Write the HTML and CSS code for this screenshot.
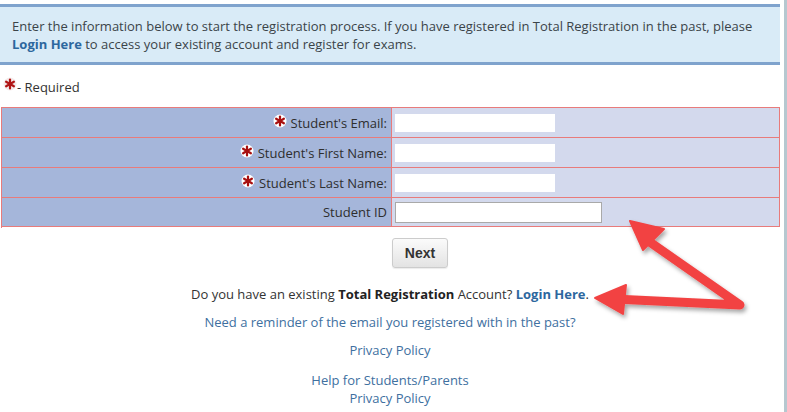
FILE: index.html
```html
<!DOCTYPE html>
<html>
<head>
<meta charset="utf-8">
<link rel="stylesheet" href="styles.css">
</head>
<body>
<div class="page">
  <div class="content">
    <div class="info">
      Enter the information below to start the registration process. If you have registered in Total Registration in the past, please<br>
      <a class="strong-link" href="#">Login Here</a> to access your existing account and register for exams.
    </div>

    <div class="required">
      <svg class="req" viewBox="0 0 14 14" width="14" height="14"><circle cx="7" cy="7" r="6.5" fill="#f4eaea"/><g stroke="#b01515" stroke-width="2.2" stroke-linecap="round"><line x1="7" y1="2.5" x2="7" y2="11.5"/><line x1="3.1" y1="4.75" x2="10.9" y2="9.25"/><line x1="3.1" y1="9.25" x2="10.9" y2="4.75"/></g></svg><span>- Required</span>
    </div>

    <div class="form">
      <div class="lbl"><svg class="req" viewBox="0 0 14 14" width="14" height="14"><circle cx="7" cy="7" r="6.5" fill="#ffffff"/><g stroke="#a81010" stroke-width="2.2" stroke-linecap="round"><line x1="7" y1="2.5" x2="7" y2="11.5"/><line x1="3.1" y1="4.75" x2="10.9" y2="9.25"/><line x1="3.1" y1="9.25" x2="10.9" y2="4.75"/></g></svg><span>Student's Email:</span></div>
      <div class="fld"><input class="txt" type="text"></div>

      <div class="lbl"><svg class="req" viewBox="0 0 14 14" width="14" height="14"><circle cx="7" cy="7" r="6.5" fill="#ffffff"/><g stroke="#a81010" stroke-width="2.2" stroke-linecap="round"><line x1="7" y1="2.5" x2="7" y2="11.5"/><line x1="3.1" y1="4.75" x2="10.9" y2="9.25"/><line x1="3.1" y1="9.25" x2="10.9" y2="4.75"/></g></svg><span>Student's First Name:</span></div>
      <div class="fld"><input class="txt" type="text"></div>

      <div class="lbl"><svg class="req" viewBox="0 0 14 14" width="14" height="14"><circle cx="7" cy="7" r="6.5" fill="#ffffff"/><g stroke="#a81010" stroke-width="2.2" stroke-linecap="round"><line x1="7" y1="2.5" x2="7" y2="11.5"/><line x1="3.1" y1="4.75" x2="10.9" y2="9.25"/><line x1="3.1" y1="9.25" x2="10.9" y2="4.75"/></g></svg><span>Student's Last Name:</span></div>
      <div class="fld"><input class="txt" type="text"></div>

      <div class="lbl last"><span>Student ID</span></div>
      <div class="fld last"><input class="txt id" type="text"></div>
    </div>

    <div class="actions">
      <button class="next" type="button">Next</button>
    </div>

    <div class="links">
      <p>Do you have an existing <b>Total Registration</b> Account? <a class="strong-link" href="#">Login Here</a>.</p>
      <p><a href="#">Need a reminder of the email you registered with in the past?</a></p>
      <p><a href="#">Privacy Policy</a></p>
      <p class="foot"><a href="#">Help for Students/Parents</a><br><a href="#">Privacy Policy</a></p>
    </div>
  </div>

  <svg class="arrows" width="787" height="412" viewBox="0 0 787 412">
    <defs>
      <filter id="sh" x="-20%" y="-20%" width="140%" height="140%">
        <feDropShadow dx="2" dy="3" stdDeviation="2" flood-color="#000" flood-opacity="0.35"/>
      </filter>
    </defs>
    <g filter="url(#sh)" fill="#f24343" stroke="#f24343">
      <polyline points="644,238 740,305 614,299" fill="none" stroke-width="9" stroke-linejoin="round" stroke-linecap="round"/>
      <polygon points="630,221 664,229 643,250" stroke-width="2" stroke-linejoin="round"/>
      <polygon points="595,298 626,285 623,314" stroke-width="2" stroke-linejoin="round"/>
    </g>
  </svg>
</div>
</body>
</html>
```

FILE: styles.css
```css
html, body {
  margin: 0;
  padding: 0;
  background: #ffffff;
}

.page {
  position: relative;
  width: 784px;
  height: 412px;
  border-right: 3px solid #b6c8d0;
  overflow: hidden;
  font-family: "Open Sans", "DejaVu Sans", sans-serif;
  font-size: 13px;
  color: #333333;
}

.content {
  width: 780px;
  padding-top: 4px;
}

a {
  color: #40709f;
  text-decoration: none;
}

.strong-link {
  color: #2d679e;
  font-weight: bold;
}

.info {
  background: #d9ebf7;
  border-top: 3px solid #7fa3cd;
  border-bottom: 3px solid #7fa3cd;
  padding: 10px 12px 9px 12px;
  line-height: 18px;
  color: #3b4449;
}

.required {
  display: flex;
  align-items: center;
  margin-top: 13px;
  padding-left: 3px;
  height: 18px;
  line-height: 18px;
}

.required .req {
  margin-top: -6px;
}

.form {
  display: grid;
  grid-template-columns: 390px 1fr;
  grid-auto-rows: 30px;
  margin-top: 11px;
  margin-left: 1px;
  width: 779px;
  box-sizing: border-box;
  border-top: 1px solid #e87b7b;
  border-left: 1px solid #e87b7b;
}

.form > div {
  border-right: 1px solid #e87b7b;
  border-bottom: 1px solid #e87b7b;
  box-sizing: border-box;
  display: flex;
  align-items: center;
}

.form > div.last {
  height: 29px;
}

.lbl {
  background: #a5b6da;
  justify-content: flex-end;
  gap: 4px;
  padding-right: 4px;
  color: #2e2e2e;
}

.lbl .req {
  margin-top: -3px;
}

.fld {
  background: #d3d9ed;
  padding-left: 3px;
}

.txt {
  display: block;
  width: 160px;
  height: 18px;
  border: none;
  padding: 0;
  margin: 0;
  background: #ffffff;
}

.txt.id {
  width: 207px;
  height: 21px;
  border: 1px solid #a9a9a9;
  box-sizing: border-box;
}

.actions {
  padding-left: 392px;
  margin-top: 10px;
}

.next {
  width: 56px;
  height: 30px;
  font-family: "Liberation Sans", Arial, sans-serif;
  font-weight: bold;
  font-size: 14px;
  color: #333333;
  background: linear-gradient(#fbfbfb, #e3e3e3);
  border: 1px solid #cccccc;
  border-radius: 3px;
  box-shadow: 0 1px 1px rgba(0,0,0,0.08);
  padding: 0;
}

.links {
  text-align: center;
  margin-top: 17px;
  line-height: 18px;
}

.links p {
  margin: 0 0 10px 0;
}

.links p.foot {
  margin-top: 12px;
}

.links b {
  color: #222222;
}

.arrows {
  position: absolute;
  left: 0;
  top: 0;
  pointer-events: none;
}
```
